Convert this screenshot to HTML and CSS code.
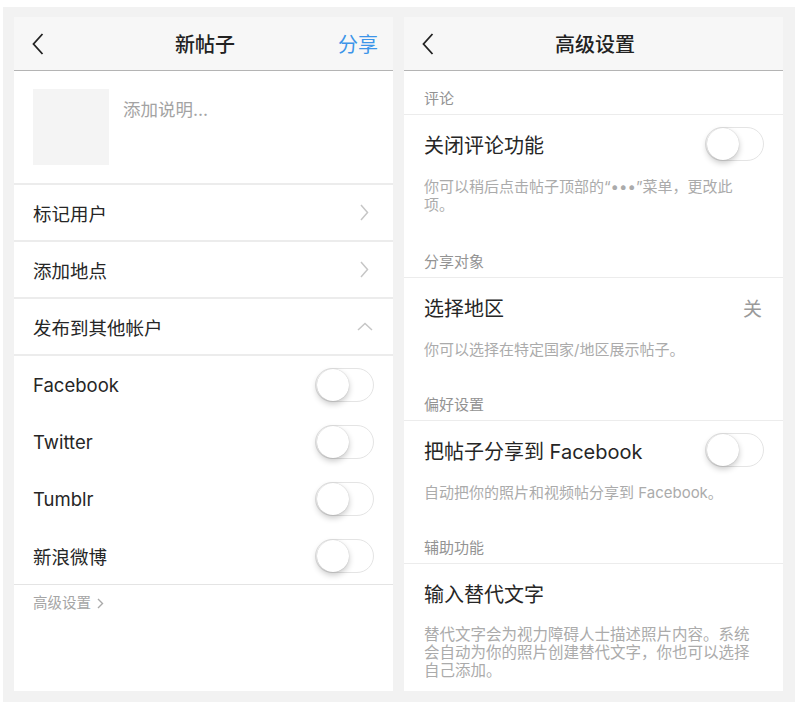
FILE: index.html
```html
<!DOCTYPE html>
<html lang="zh-CN">
<head>
  <meta charset="UTF-8" />
  <meta name="viewport" content="width=device-width, initial-scale=1.0"/>
  <title>新帖子 / 高级设置</title>
  <link rel="stylesheet" href="styles.css">
</head>
<body>
  <div class="frame">

    <!-- 新帖子 -->
    <section class="screen">
      <header class="nav">
        <span class="nav-back">
          <svg width="12" height="22" viewBox="0 0 12 22"><polyline points="10.5,1 1.5,11 10.5,21" fill="none" stroke="#222" stroke-width="1.8"/></svg>
        </span>
        <h1 class="nav-title">新帖子</h1>
        <span class="nav-action">分享</span>
      </header>

      <div class="caption">
        <div class="thumb"></div>
        <div class="caption-text">添加说明...</div>
      </div>

      <div class="row">
        <span>标记用户</span>
        <svg width="9" height="17" viewBox="0 0 9 17"><polyline points="1,1 7.5,8.5 1,16" fill="none" stroke="#c6c6c6" stroke-width="1.5"/></svg>
      </div>
      <div class="row">
        <span>添加地点</span>
        <svg width="9" height="17" viewBox="0 0 9 17"><polyline points="1,1 7.5,8.5 1,16" fill="none" stroke="#c6c6c6" stroke-width="1.5"/></svg>
      </div>
      <div class="row">
        <span>发布到其他帐户</span>
        <svg class="up" width="16" height="9" viewBox="0 0 16 9"><polyline points="1,8 8,1.5 15,8" fill="none" stroke="#c6c6c6" stroke-width="1.5"/></svg>
      </div>

      <div class="accounts">
        <div class="row row-plain">
          <span>Facebook</span>
          <span class="toggle"><span class="knob"></span></span>
        </div>
        <div class="row row-plain">
          <span>Twitter</span>
          <span class="toggle"><span class="knob"></span></span>
        </div>
        <div class="row row-plain">
          <span>Tumblr</span>
          <span class="toggle"><span class="knob"></span></span>
        </div>
        <div class="row row-plain">
          <span>新浪微博</span>
          <span class="toggle"><span class="knob"></span></span>
        </div>
      </div>

      <div class="more">
        高级设置
        <svg width="7" height="11" viewBox="0 0 7 11"><polyline points="1,1 5.5,5.5 1,10" fill="none" stroke="#aaa" stroke-width="1.4"/></svg>
      </div>
    </section>

    <!-- 高级设置 -->
    <section class="screen">
      <header class="nav">
        <span class="nav-back">
          <svg width="12" height="22" viewBox="0 0 12 22"><polyline points="10.5,1 1.5,11 10.5,21" fill="none" stroke="#222" stroke-width="1.8"/></svg>
        </span>
        <h1 class="nav-title">高级设置</h1>
        <span class="nav-action"></span>
      </header>

      <div class="group-title">评论</div>
      <div class="setting">
        <span>关闭评论功能</span>
        <span class="toggle"><span class="knob"></span></span>
      </div>
      <p class="hint hint-first">你可以稍后点击帖子顶部的“•••”菜单，更改此<br>项。</p>

      <div class="group-title">分享对象</div>
      <div class="setting">
        <span>选择地区</span>
        <span class="value">关</span>
      </div>
      <p class="hint">你可以选择在特定国家/地区展示帖子。</p>

      <div class="group-title">偏好设置</div>
      <div class="setting">
        <span>把帖子分享到 Facebook</span>
        <span class="toggle"><span class="knob"></span></span>
      </div>
      <p class="hint">自动把你的照片和视频帖分享到 Facebook。</p>

      <div class="group-title">辅助功能</div>
      <div class="setting">
        <span>输入替代文字</span>
      </div>
      <p class="hint hint-last">替代文字会为视力障碍人士描述照片内容。系统<br>会自动为你的照片创建替代文字，你也可以选择<br>自己添加。</p>
    </section>

  </div>
</body>
</html>
```

FILE: styles.css
```css
* { box-sizing: border-box; }
body {
  margin: 0;
  background: #fff;
  font-family: Inter, "Noto Sans CJK SC", sans-serif;
  color: #262626;
}
.frame {
  display: flex; gap: 11px;
  width: 792px; height: 695px;
  margin: 7px 0 0 3px;
  padding: 10px 12px 11px 11px;
  background: #f2f2f2;
}
.screen {
  flex: 1;
  background: #fff;
  overflow: hidden;
}

/* nav bar */
.nav {
  display: grid; grid-template-columns: 1fr auto 1fr;
  align-items: center;
  height: 54px;
  padding: 0 15px 0 18px;
  background: #f7f7f7;
  border-bottom: 1px solid #b4b4b4;
}
.nav-back { display: flex; align-items: center; }
.nav-title {
  margin: 0;
  font-size: 20px; font-weight: 500;
  color: #222;
}
.nav-action {
  justify-self: end;
  font-size: 20px;
  color: #3d95e9;
}

/* new post */
.caption {
  display: flex; gap: 14px;
  height: 114px;
  padding: 18px 19px;
  border-bottom: 2px solid #ececec;
}
.thumb { width: 76px; height: 76px; background: #f4f4f4; }
.caption-text {
  margin-top: 9px;
  font-size: 17.5px; line-height: 24px;
  color: #a3a3a3;
}
.row {
  display: flex; align-items: center; justify-content: space-between;
  height: 57px;
  padding: 0 24px 0 19px;
  border-bottom: 2px solid #ececec;
  font-size: 18.5px;
}
.row .up { margin-right: -4px; }
.row-plain { border-bottom: none; padding-right: 19px; }
.accounts { border-bottom: 1px solid #e4e4e4; }
.more {
  display: flex; align-items: center; gap: 6px;
  padding: 8px 19px;
  font-size: 14.5px; line-height: 20px;
  color: #a5a5a5;
}

/* switch */
.toggle {
  display: flex; align-items: center;
  width: 59px; height: 34px;
  padding: 0 1px;
  border: 1.5px solid #e4e4e4;
  border-radius: 17px;
  background: #fff;
}
.knob {
  width: 32px; height: 32px;
  border-radius: 50%;
  background: #fff;
  box-shadow: 0 3px 6px rgba(0,0,0,0.22), 0 0 1px rgba(0,0,0,0.25);
}

/* advanced settings */
.group-title {
  padding: 18px 20px 5px;
  font-size: 15px; line-height: 20px;
  color: #939393;
  border-bottom: 1px solid #ececec;
}
.setting {
  display: flex; align-items: center; justify-content: space-between;
  height: 58px;
  padding: 0 19px 0 20px;
  font-size: 20px;
}
.value { font-size: 19px; color: #9a9a9a; margin-right: 2px; }
.hint {
  margin: 0;
  padding: 5px 20px 18px;
  font-size: 15px; line-height: 18px;
  color: #ababab;
}
.hint-first { padding-bottom: 20px; }
.hint-last { font-size: 15.5px; line-height: 18px; padding-top: 4px; }
```
